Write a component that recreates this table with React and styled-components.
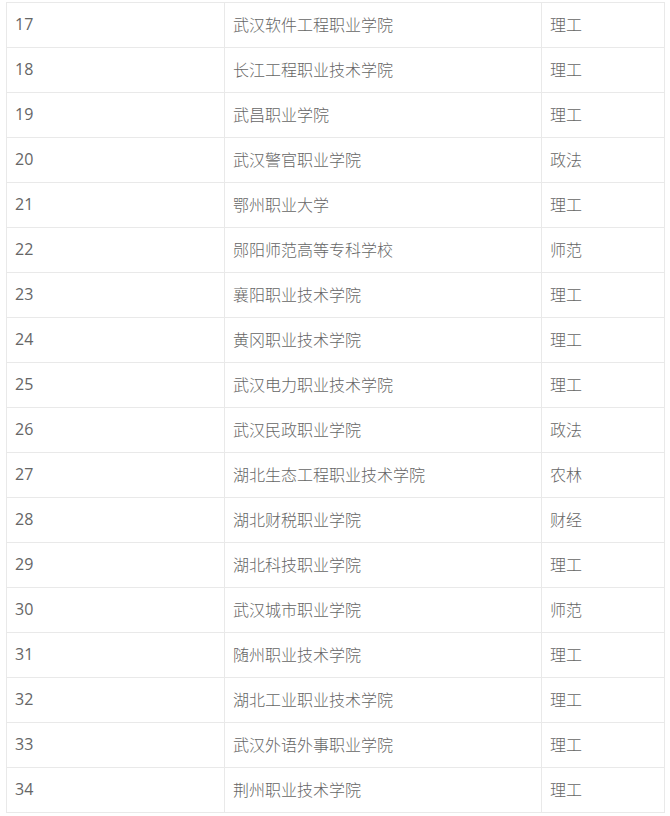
import styled, { createGlobalStyle } from "styled-components";

const GlobalStyle = createGlobalStyle`
  body {
    margin: 0;
    background: #ffffff;
    font-family: "Noto Sans CJK SC", "Noto Sans", sans-serif;
  }
`;

const Page = styled.div`
  padding: 2px 6px 0 6px;
`;

const Table = styled.table`
  width: 659px;
  border-collapse: collapse;
  table-layout: fixed;
  color: #666666;
  font-size: 16px;
`;

const Row = styled.tr`
  height: 45px;
`;

const Cell = styled.td`
  box-sizing: border-box;
  width: ${(p) => p.$width}px;
  border: 1px solid #e9e9e9;
  padding: 0 0 2px 8px;
  line-height: 20px;
  vertical-align: middle;
  white-space: nowrap;
  font-weight: 300;
`;

const NumCell = styled(Cell)`
  font-family: "Open Sans", "Noto Sans CJK SC", sans-serif;
  font-size: 16px;
  font-weight: 400;
`;

const rows = [
  [17, "武汉软件工程职业学院", "理工"],
  [18, "长江工程职业技术学院", "理工"],
  [19, "武昌职业学院", "理工"],
  [20, "武汉警官职业学院", "政法"],
  [21, "鄂州职业大学", "理工"],
  [22, "郧阳师范高等专科学校", "师范"],
  [23, "襄阳职业技术学院", "理工"],
  [24, "黄冈职业技术学院", "理工"],
  [25, "武汉电力职业技术学院", "理工"],
  [26, "武汉民政职业学院", "政法"],
  [27, "湖北生态工程职业技术学院", "农林"],
  [28, "湖北财税职业学院", "财经"],
  [29, "湖北科技职业学院", "理工"],
  [30, "武汉城市职业学院", "师范"],
  [31, "随州职业技术学院", "理工"],
  [32, "湖北工业职业技术学院", "理工"],
  [33, "武汉外语外事职业学院", "理工"],
  [34, "荆州职业技术学院", "理工"],
];

export default function App() {
  return (
    <>
      <GlobalStyle />
      <Page>
        <Table>
          <tbody>
            {rows.map(([n, name, type]) => (
              <Row key={n}>
                <NumCell $width={218}>{n}</NumCell>
                <Cell $width={317}>{name}</Cell>
                <Cell $width={123}>{type}</Cell>
              </Row>
            ))}
          </tbody>
        </Table>
      </Page>
    </>
  );
}
